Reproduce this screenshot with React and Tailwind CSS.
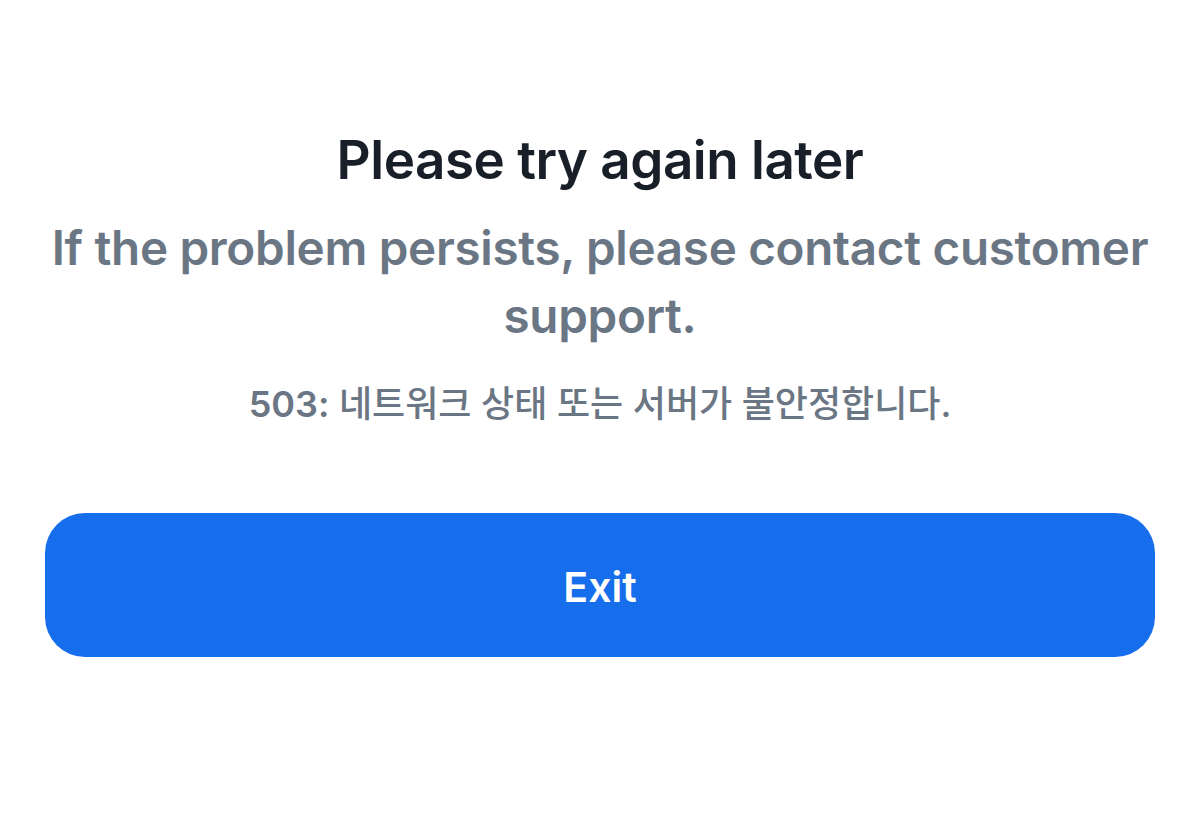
export default function App() {
  return (
    <div className="w-[1200px] h-[816px] bg-white flex flex-col items-center font-['Inter','Noto_Sans_CJK_KR',sans-serif]">
      <h1 className="mt-[126px] text-[53px] leading-[68px] font-semibold text-[#191f28] tracking-[-0.5px]">
        Please try again later
      </h1>
      <p className="mt-[20px] px-[40px] text-center text-[47.6px] leading-[68px] font-semibold text-[#6b7684] tracking-[-0.3px]">
        If the problem persists, please contact customer support.
      </p>
      <p className="mt-[32px] text-[36px] leading-[44px] font-medium text-[#6b7684]">
        <span className="font-semibold">503:</span> 네트워크 상태 또는 서버가 불안정합니다.
      </p>
      <button className="mt-[87px] w-[1110px] h-[144px] pt-[6px] rounded-[40px] bg-[#176eed] text-white text-[41px] font-semibold">
        Exit
      </button>
    </div>
  );
}
